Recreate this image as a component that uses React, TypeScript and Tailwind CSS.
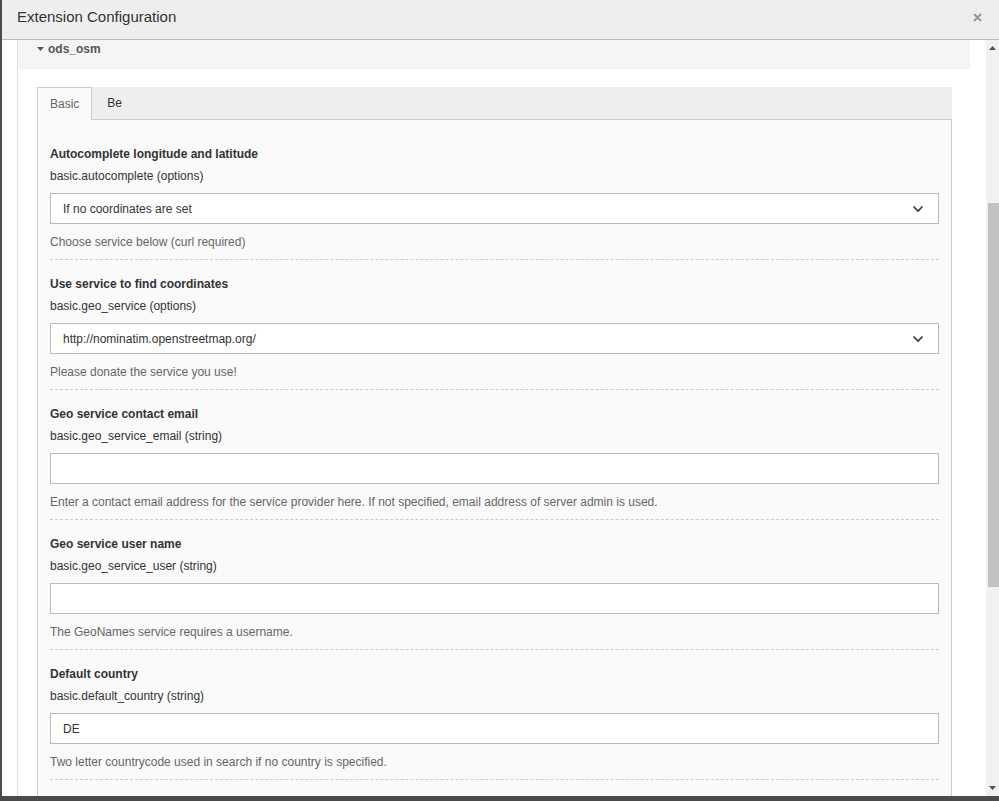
import React from "react"

const fields = [
  {
    label: "Autocomplete longitude and latitude",
    key: "basic.autocomplete (options)",
    type: "select",
    value: "If no coordinates are set",
    help: "Choose service below (curl required)",
  },
  {
    label: "Use service to find coordinates",
    key: "basic.geo_service (options)",
    type: "select",
    value: "http://nominatim.openstreetmap.org/",
    help: "Please donate the service you use!",
  },
  {
    label: "Geo service contact email",
    key: "basic.geo_service_email (string)",
    type: "text",
    value: "",
    help: "Enter a contact email address for the service provider here. If not specified, email address of server admin is used.",
  },
  {
    label: "Geo service user name",
    key: "basic.geo_service_user (string)",
    type: "text",
    value: "",
    help: "The GeoNames service requires a username.",
  },
  {
    label: "Default country",
    key: "basic.default_country (string)",
    type: "text",
    value: "DE",
    help: "Two letter countrycode used in search if no country is specified.",
  },
]

function Chevron() {
  return (
    <svg width="12" height="8" viewBox="0 0 12 8" fill="none">
      <path d="M1.5 1.5 L6 6 L10.5 1.5" stroke="#333" strokeWidth="1.6" />
    </svg>
  )
}

export default function App() {
  return (
    <div
      className="w-[999px] h-[801px] overflow-hidden bg-[#4b4b4b] pl-[2px] pb-[5px] flex flex-col"
      style={{ fontFamily: '"Liberation Sans", Arial, sans-serif' }}
    >
      <div className="flex-1 flex flex-col bg-white min-h-0">
        {/* header */}
        <div className="h-[40px] shrink-0 bg-[#eeeeee] border-b border-[#bbbbbb] flex items-center justify-between pl-[15px] pr-[17px] pb-[4px]">
          <span className="text-[15px] text-[#333]">Extension Configuration</span>
          <svg width="9" height="9" viewBox="0 0 9 9">
            <path d="M1 1 L8 8 M8 1 L1 8" stroke="#999" strokeWidth="2" />
          </svg>
        </div>

        {/* body */}
        <div className="flex-1 flex min-h-0">
          <div className="flex-1 pl-[15px] pr-[16px] overflow-hidden">
            <div className="border-l border-[#dddddd] h-full">
              <div className="h-[29px] bg-[#f5f5f5] flex items-start pt-[1px] pl-[19px] text-[12px] leading-[16px] font-bold text-[#555]">
                <svg width="7" height="16" viewBox="0 0 7 16" className="mr-[4px]">
                  <path d="M0 6 L7 6 L3.5 10 Z" fill="#555" />
                </svg>
                ods_osm
              </div>
              <div className="pt-[18px] pl-[19px] pr-[18px]">
                {/* tabs */}
                <div className="h-[33px] bg-[#eeeeee] border-b border-[#cccccc] flex items-stretch text-[12px]">
                  <div className="px-[12px] bg-[#fafafa] border border-b-0 border-[#cccccc] flex items-center text-[#666] -mb-px">
                    Basic
                  </div>
                  <div className="px-[15px] flex items-center text-[#333]">Be</div>
                </div>
                <div className="bg-[#fafafa] border-l border-r border-[#cccccc] px-[12px] pt-[10px] h-[700px]">
                  {fields.map((f) => (
                    <div key={f.key} className="pt-[13px] pb-[8px] border-b border-dashed border-[#cccccc]">
                      <div className="text-[12px] font-bold leading-[22px] text-[#333]">{f.label}</div>
                      <div className="text-[12px] leading-[22px] text-[#333]">{f.key}</div>
                      <div className="mt-[6px] h-[31px] bg-white border border-[#bbbbbb] flex items-center justify-between pl-[12px] pr-[14px] text-[12px] text-[#333]">
                        <span>{f.value}</span>
                        {f.type === "select" && <Chevron />}
                      </div>
                      <div className="mt-[9px] text-[12px] leading-[18px] text-[#666]">{f.help}</div>
                    </div>
                  ))}
                </div>
              </div>
            </div>
          </div>

          {/* scrollbar */}
          <div className="w-[13px] bg-[#f1f1f1] flex flex-col items-end">
            <div className="h-[16px] w-full flex items-center justify-center">
              <svg width="7" height="4" viewBox="0 0 7 4">
                <path d="M0 4 L3.5 0 L7 4 Z" fill="#505050" />
              </svg>
            </div>
            <div className="h-[147px]" />
            <div className="w-[11px] h-[384px] bg-[#c1c1c1]" />
            <div className="flex-1" />
            <div className="h-[16px] w-full flex items-center justify-center">
              <svg width="7" height="4" viewBox="0 0 7 4">
                <path d="M0 0 L7 0 L3.5 4 Z" fill="#505050" />
              </svg>
            </div>
          </div>
        </div>
      </div>
    </div>
  )
}
